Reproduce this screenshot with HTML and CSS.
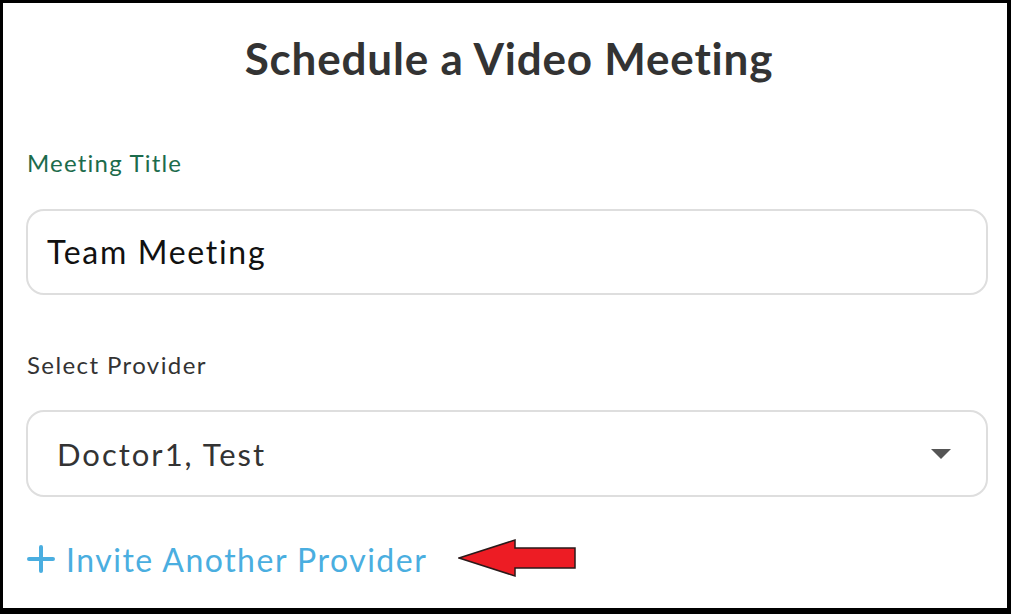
FILE: index.html
```html
<!DOCTYPE html>
<html lang="en">
<head>
    <meta charset="UTF-8">
    <title>Schedule a Video Meeting</title>
    <link rel="stylesheet" href="styles.css">
</head>
<body>

<div class="frame">
    <h1>Schedule a Video Meeting</h1>
    <form class="meeting-form">
        <label class="label-title" for="title">Meeting Title</label>
        <div class="field">Team Meeting</div>

        <label class="label-provider" for="provider">Select Provider</label>
        <div class="field select">
            <span>Doctor1, Test</span>
            <span class="caret"></span>
        </div>

        <div class="invite-row">
            <a class="invite" href="#">
                <svg class="plus" width="28" height="28" viewBox="0 0 28 28">
                    <path d="M14 2v24M2 14h24" stroke="#4aaee0" stroke-width="4" stroke-linecap="round"/>
                </svg>
                Invite Another Provider
            </a>
            <svg class="arrow" width="120" height="40" viewBox="0 0 120 40">
                <polygon points="1,19 57,1 57,9 117,9 117,29 57,29 57,37" fill="#ed1c24" stroke="#2a1a1a" stroke-width="1.5"/>
            </svg>
        </div>
    </form>
</div>

</body>
</html>
```

FILE: styles.css
```css
* {
    box-sizing: border-box;
}
body {
    margin: 0;
    font-family: Lato, "Noto Sans", sans-serif;
    background: white;
}
.frame {
    width: 1011px;
    height: 614px;
    border-style: solid;
    border-color: black;
    border-width: 3px 4px 6px 3px;
    padding: 29px 19px 0 23px;
    overflow: hidden;
}
h1 {
    margin: 0;
    text-align: center;
    font-size: 44px;
    line-height: 1.2;
    font-weight: bold;
    color: #333;
    letter-spacing: 0.8px;
    padding-left: 4px;
}
.meeting-form label {
    display: block;
    font-size: 24px;
    line-height: 1.2;
}
.label-title {
    margin-top: 64px;
    color: #1c6b4c;
    letter-spacing: 1.2px;
    padding-left: 1px;
}
.label-provider {
    margin-top: 56px;
    color: #333;
    letter-spacing: 1.4px;
    padding-left: 1px;
}
.field {
    display: flex;
    align-items: center;
    height: 86px;
    margin-top: 31px;
    border: 2px solid #dedede;
    border-radius: 18px;
    padding: 0 19px;
    font-size: 32px;
    letter-spacing: 1.7px;
    color: #111;
}
.select {
    justify-content: space-between;
    height: 87px;
    padding: 0 35px 0 29px;
    color: #333;
    font-size: 31px;
    letter-spacing: 2px;
}
.caret {
    width: 0;
    height: 0;
    border-left: 10px solid transparent;
    border-right: 10px solid transparent;
    border-top: 10px solid #555;
}
.invite-row {
    display: flex;
    align-items: center;
    margin-top: 42px;
}
.invite {
    display: flex;
    align-items: center;
    gap: 11px;
    color: #4aaee0;
    font-size: 32px;
    letter-spacing: 1.5px;
    text-decoration: none;
}
.plus {
    margin-left: 1px;
}
.arrow {
    margin-left: 31px;
}
```
